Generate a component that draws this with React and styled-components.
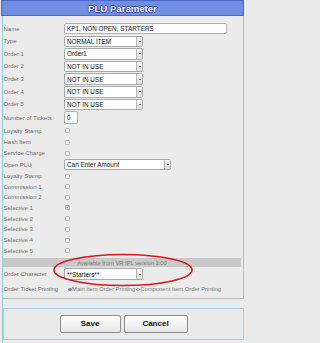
import React from "react";
import styled, { createGlobalStyle } from "styled-components";

const Global = createGlobalStyle`
  html, body { margin: 0; padding: 0; background: #ebebeb; }
  body {
    width: 247px; height: 343px; overflow: hidden;
    font-family: "Liberation Sans", Arial, sans-serif;
  }
`;

const Frame = styled.div`
  position: relative;
  width: 247px;
  height: 343px;
`;

const Header = styled.div`
  margin-left: 1px;
  width: 243px;
  height: 16px;
  box-sizing: border-box;
  background: #6e8ee1;
  border: 1px solid #4c68c8;
  display: flex;
  align-items: center;
  justify-content: center;
  color: #fff;
  font-weight: bold;
  font-size: 9.6px;
  text-shadow: -0.7px 0 #2c3f9c, 0.7px 0 #2c3f9c, 0 -0.7px #2c3f9c, 0 0.7px #2c3f9c;
`;

const Body = styled.div`
  margin-left: 2px;
  width: 243px;
  height: 327px;
  box-sizing: border-box;
  border-left: 1px solid #8cd0d2;
`;

const Panel = styled.div`
  width: 241px;
  box-sizing: border-box;
  border-right: 1px solid #b8b8b8;
  border-bottom: 1px solid #b8b8b8;
  padding-top: 6px;
`;

const Row = styled.div`
  display: grid;
  grid-template-columns: 61px 1fr;
  align-items: center;
  height: ${(p) => p.$h}px;
`;

const Label = styled.span`
  font-size: 6px;
  color: #6e6e6e;
  white-space: nowrap;
  padding-left: 0.5px;
`;

const SelectBox = styled.div`
  width: ${(p) => p.$w}px;
  height: 11.5px;
  box-sizing: border-box;
  background: #fff;
  border: 1px solid #a9a9a9;
  border-radius: 2px;
  display: flex;
  align-items: center;
  padding-left: 2px;
  font-size: 6.4px;
  color: #111;
  overflow: hidden;
`;

const Arrow = styled.span`
  margin-left: auto;
  width: 6px;
  height: 100%;
  box-sizing: border-box;
  border-left: 1px solid #b5b5b5;
  background: linear-gradient(#fdfdfd, #dedede);
  display: flex;
  align-items: center;
  justify-content: center;
  &::after {
    content: "";
    border-left: 1.3px solid transparent;
    border-right: 1.3px solid transparent;
    border-top: 1.6px solid #000;
  }
`;

const TextInput = styled.div`
  width: ${(p) => p.$w}px;
  height: ${(p) => p.$ht || 11.5}px;
  box-sizing: border-box;
  background: #fff;
  border: 1px solid #b0b0b0;
  border-radius: 2px;
  display: flex;
  align-items: center;
  padding-left: 2px;
  font-size: 6.4px;
  color: #111;
  white-space: nowrap;
`;

const Check = styled.span`
  width: 5px;
  height: 5px;
  box-sizing: border-box;
  border: 1px solid #bcbcbc;
  background: #f2f2f2;
  border-radius: 1px;
  margin-left: 0.5px;
  display: flex;
  align-items: center;
  justify-content: center;
  overflow: visible;
`;

const InfoBar = styled.div`
  margin-top: 2.25px;
  width: 238px;
  height: 9px;
  background: #c9c9c9;
  display: flex;
  align-items: center;
  justify-content: center;
  font-size: 5.8px;
  color: #7a7a7a;
`;

const RadioGroup = styled.div`
  display: flex;
  align-items: center;
  font-size: 5.8px;
  color: #7a7a7a;
  white-space: nowrap;
  margin-left: 4px;
`;

const RadioDot = styled.span`
  width: 3.5px;
  height: 3.5px;
  border-radius: 50%;
  box-sizing: border-box;
  border: 0.8px solid ${(p) => (p.$on ? "#6c7fa8" : "#a0a0a0")};
  background: ${(p) => (p.$on ? "#6c7fa8" : "#fff")};
  margin-right: 0.6px;
  margin-left: ${(p) => p.$ml || 0}px;
`;

const ButtonPanel = styled.div`
  margin-top: 9px;
  width: 241px;
  box-sizing: border-box;
  border: 1px solid #aecae3;
  padding: 6px 0;
  display: flex;
  justify-content: center;
  gap: 3px;
`;

const Button = styled.div`
  width: ${(p) => p.$w}px;
  height: 18px;
  box-sizing: border-box;
  border: 1px solid #8a8a8a;
  border-radius: 2px;
  background: linear-gradient(#fefefe, #e9e9e9);
  display: flex;
  align-items: center;
  justify-content: center;
  font-weight: bold;
  font-size: 8px;
  color: #111;
`;

const Ellipse = styled.svg`
  position: absolute;
  left: 52px;
  top: 252px;
  width: 144px;
  height: 36px;
  pointer-events: none;
`;

const SelectField = ({ w, value }) => (
  <SelectBox $w={w}>
    <span>{value}</span>
    <Arrow />
  </SelectBox>
);

const CheckRow = ({ label, h, checked }) => (
  <Row $h={h}>
    <Label>{label}</Label>
    <Check>
      {checked && (
        <svg width="5" height="5" viewBox="0 0 5 5">
          <path d="M1 2.6 L2 3.7 L4.1 0.9" fill="none" stroke="#2a3566" strokeWidth="0.9" />
        </svg>
      )}
    </Check>
  </Row>
);

const orders = [
  ["Type", "NORMAL ITEM", 12.5],
  ["Order 1", "Order1", 12.5],
  ["Order 2", "NOT IN USE", 12.75],
  ["Order 3", "NOT IN USE", 12.75],
  ["Order 4", "NOT IN USE", 12.5],
  ["Order 5", "NOT IN USE", 12.5],
];

const checksA = [
  ["Loyalty Stamp", 12],
  ["Hash Item", 11],
  ["Service Charge", 11],
];

const checksB = [
  ["Loyalty Stamp", 11],
  ["Commission 1", 10.5],
  ["Commission 2", 10.5],
  ["Selective 1", 10.75, true],
  ["Selective 2", 10.75],
  ["Selective 3", 10.75],
  ["Selective 4", 10.5],
  ["Selective 5", 10.5],
];

export default function App() {
  return (
    <Frame>
      <Global />
      <Header>PLU Parameter</Header>
      <Body>
        <Panel>
          <Row $h={13}>
            <Label>Name</Label>
            <TextInput $w={163}>KP1, NON OPEN, STARTERS</TextInput>
          </Row>
          {orders.map(([l, v, h]) => (
            <Row key={l} $h={h}>
              <Label>{l}</Label>
              <SelectField w={79} value={v} />
            </Row>
          ))}
          <Row $h={14}>
            <Label>Number of Tickets</Label>
            <TextInput $w={14} $ht={13}>0</TextInput>
          </Row>
          {checksA.map(([l, h]) => (
            <CheckRow key={l} label={l} h={h} />
          ))}
          <Row $h={12}>
            <Label>Open PLU</Label>
            <SelectField w={107} value="Can Enter Amount" />
          </Row>
          {checksB.map(([l, h, c], i) => (
            <CheckRow key={l + i} label={l} h={h} checked={c} />
          ))}
          <InfoBar>Available from VR IPL version 3.00</InfoBar>
          <Row $h={14}>
            <Label>Order Character</Label>
            <SelectField w={79} value="**Starters**" />
          </Row>
          <Row $h={16.5}>
            <Label>Order Ticket Printing</Label>
            <RadioGroup>
              <RadioDot $on />
              <span>Main Item Order Printing</span>
              <RadioDot $ml={1} />
              <span>Component Item Order Printing</span>
            </RadioGroup>
          </Row>
        </Panel>
        <ButtonPanel>
          <Button $w={61}>Save</Button>
          <Button $w={64}>Cancel</Button>
        </ButtonPanel>
      </Body>
      <Ellipse viewBox="0 0 144 36">
        <ellipse cx="71" cy="18" rx="69" ry="15.5" fill="none" stroke="#e2141a" strokeWidth="1.6" />
      </Ellipse>
    </Frame>
  );
}
